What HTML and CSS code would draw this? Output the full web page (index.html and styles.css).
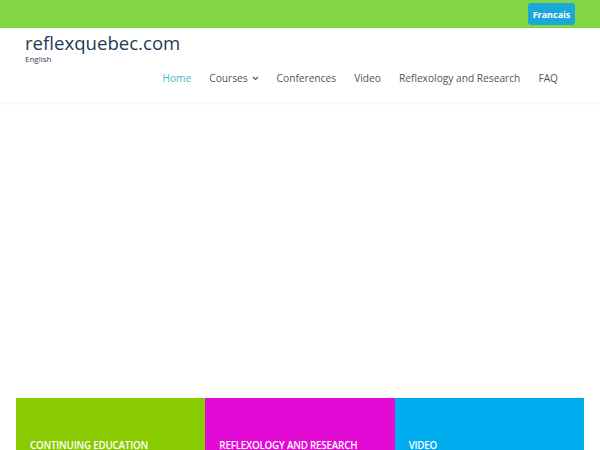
FILE: index.html
```html
<!DOCTYPE html>
<html lang="en">
<head>
<meta charset="utf-8">
<title>reflexquebec.com</title>
<link rel="stylesheet" href="styles.css">
</head>
<body>
<div class="topbar">
  <a class="lang-btn" href="#">Francais</a>
</div>
<header class="header">
  <div class="brand">
    <div class="site-title">reflexquebec.com</div>
    <div class="site-desc">English</div>
  </div>
  <nav class="nav">
    <a class="nav-item active" href="#">Home</a>
    <a class="nav-item" href="#">Courses <svg class="caret" width="7" height="5" viewBox="0 0 7 5"><path d="M1 1l2.5 2.5L6 1" fill="none" stroke="#555" stroke-width="1.2"/></svg></a>
    <a class="nav-item" href="#">Conferences</a>
    <a class="nav-item" href="#">Video</a>
    <a class="nav-item" href="#">Reflexology and Research</a>
    <a class="nav-item" href="#">FAQ</a>
  </nav>
</header>
<main class="hero"></main>
<section class="cards">
  <div class="card green">CONTINUING EDUCATION</div>
  <div class="card magenta">REFLEXOLOGY AND RESEARCH</div>
  <div class="card blue">VIDEO</div>
</section>
</body>
</html>
```
FILE: styles.css
```css
* { box-sizing: border-box; }
html, body { margin: 0; padding: 0; }
body {
  font-family: "Open Sans", "Liberation Sans", sans-serif;
  background: #fff;
  width: 600px;
  height: 450px;
  overflow: hidden;
}
a { text-decoration: none; }
.topbar {
  height: 28px;
  background: #82d645;
  display: flex;
  justify-content: flex-end;
  align-items: center;
  padding-right: 25px;
}
.lang-btn {
  background: #1aa8d6;
  color: #fff;
  font-size: 9px;
  font-weight: 700;
  height: 22px;
  width: 47px;
  border-radius: 3px;
  display: flex;
  align-items: center;
  justify-content: center;
}
.header {
  height: 74px;
  box-shadow: 0 1px 3px rgba(0,0,0,0.05);
  padding-left: 25px;
}
.brand { padding-top: 4px; }
.site-title {
  font-size: 18.6px;
  color: #1d3b58;
  line-height: 21px;
}
.site-desc {
  font-size: 8px;
  color: #333c48;
  line-height: 10px;
  margin-top: 1px;
}
.nav {
  display: flex;
  gap: 18px;
  justify-content: flex-end;
  padding-right: 42px;
  margin-top: 7px;
}
.nav-item {
  font-size: 10.2px;
  color: #555;
  display: flex;
  align-items: center;
  gap: 4px;
}
.nav-item.active { color: #4ab8c8; }
.caret { margin-top: 1px; }
.hero { height: 296px; }
.cards {
  display: grid;
  grid-template-columns: repeat(3, 1fr);
  margin: 0 16px;
  height: 52px;
}
.card {
  color: #fff;
  font-size: 9.8px;
  letter-spacing: -0.2px;
  font-weight: 600;
  padding: 41px 0 0 14px;
  line-height: 13px;
  white-space: nowrap;
}
.green { background: #88cc00; }
.magenta { background: #e40ad6; }
.blue { background: #00aeef; }
```
